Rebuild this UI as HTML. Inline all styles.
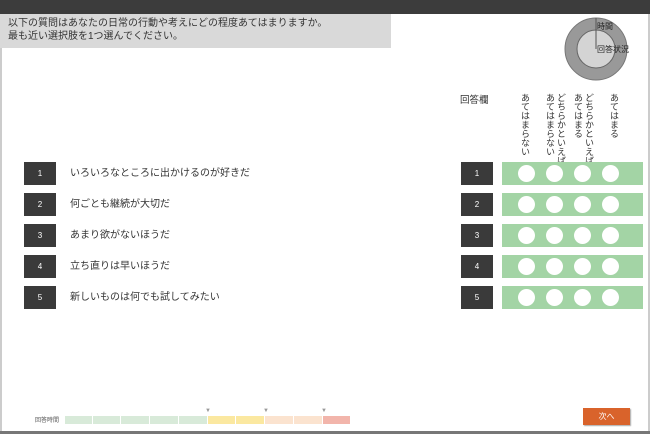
<!DOCTYPE html>
<html><head><meta charset="utf-8"><style>
*{margin:0;padding:0;box-sizing:border-box}
body{width:650px;height:434px;position:relative;background:#fff;font-family:"Liberation Sans","Noto Sans CJK JP",sans-serif;overflow:hidden;color:#333}
.a{position:absolute}
.top{left:0;top:0;width:650px;height:14px;background:#3c3c3c}
.bot{left:0;top:431px;width:650px;height:3px;background:#777}
.lb{left:0;top:14px;width:2px;height:417px;background:#ccc}
.rb{right:0;top:14px;width:2px;height:417px;background:#ccc}
.ins{left:0;top:14px;width:391px;height:34px;background:#d9d9d9;font-size:10px;line-height:13px;padding:3px 0 0 8px;color:#333}
.nb{width:32px;height:23px;background:#3a3a3a;color:#fff;font-size:8px;text-align:center;line-height:23px}
.q{left:70px;font-size:10px;line-height:23px}
.g{left:502px;width:141px;height:23px;background:#a3d4a5}
.c{position:absolute;top:3px;width:17px;height:17px;border-radius:50%;background:#fff}
.v{writing-mode:vertical-rl;font-size:9px;line-height:11px;top:93px;letter-spacing:0}
.seg{top:416px;height:8px}
.mk{top:408px;font-size:6px;color:#999}
</style></head><body>
<div class="a top"></div><div class="a lb"></div><div class="a rb"></div><div class="a bot"></div>
<div class="a ins">以下の質問はあなたの日常の行動や考えにどの程度あてはまりますか。<br>最も近い選択肢を1つ選んでください。</div>
<svg class="a" style="left:562px;top:16px" width="70" height="70">
<circle cx="34" cy="33" r="31" fill="#999" stroke="#777" stroke-width="1"/>
<circle cx="34" cy="33" r="19" fill="#d4d4d4" stroke="#666" stroke-width="1"/>
<line x1="34" y1="2" x2="34" y2="33" stroke="#555" stroke-width="1"/>
<text x="35" y="13" font-size="8" fill="#222" font-family="Noto Sans CJK JP">時間</text>
<text x="35" y="36" font-size="8" fill="#222" font-family="Noto Sans CJK JP">回答状況</text>
</svg>
<div class="a" style="left:460px;top:92px;font-size:9.5px">回答欄</div>
<div class="a v" style="left:519px">あてはまらない</div>
<div class="a v" style="left:544px">どちらかといえば<br>あてはまらない</div>
<div class="a v" style="left:572px">どちらかといえば<br>あてはまる</div>
<div class="a v" style="left:608px">あてはまる</div>

<div class="a nb" style="left:24px;top:162px">1</div><div class="a q" style="top:162px">いろいろなところに出かけるのが好きだ</div>
<div class="a nb" style="left:24px;top:193px">2</div><div class="a q" style="top:193px">何ごとも継続が大切だ</div>
<div class="a nb" style="left:24px;top:224px">3</div><div class="a q" style="top:224px">あまり欲がないほうだ</div>
<div class="a nb" style="left:24px;top:255px">4</div><div class="a q" style="top:255px">立ち直りは早いほうだ</div>
<div class="a nb" style="left:24px;top:286px">5</div><div class="a q" style="top:286px">新しいものは何でも試してみたい</div>

<div class="a nb" style="left:461px;top:162px">1</div>
<div class="a nb" style="left:461px;top:193px">2</div>
<div class="a nb" style="left:461px;top:224px">3</div>
<div class="a nb" style="left:461px;top:255px">4</div>
<div class="a nb" style="left:461px;top:286px">5</div>
<div class="a g" style="top:162px"><i class="c" style="left:16px"></i><i class="c" style="left:44px"></i><i class="c" style="left:72px"></i><i class="c" style="left:100px"></i></div>
<div class="a g" style="top:193px"><i class="c" style="left:16px"></i><i class="c" style="left:44px"></i><i class="c" style="left:72px"></i><i class="c" style="left:100px"></i></div>
<div class="a g" style="top:224px"><i class="c" style="left:16px"></i><i class="c" style="left:44px"></i><i class="c" style="left:72px"></i><i class="c" style="left:100px"></i></div>
<div class="a g" style="top:255px"><i class="c" style="left:16px"></i><i class="c" style="left:44px"></i><i class="c" style="left:72px"></i><i class="c" style="left:100px"></i></div>
<div class="a g" style="top:286px"><i class="c" style="left:16px"></i><i class="c" style="left:44px"></i><i class="c" style="left:72px"></i><i class="c" style="left:100px"></i></div>

<div class="a" style="left:35px;top:415px;font-size:6px;color:#555">回答時間</div>
<div class="a seg" style="left:65px;width:27px;background:#d8ead9"></div>
<div class="a seg" style="left:93px;width:27px;background:#d8ead9"></div>
<div class="a seg" style="left:121px;width:28px;background:#d8ead9"></div>
<div class="a seg" style="left:150px;width:28px;background:#d8ead9"></div>
<div class="a seg" style="left:179px;width:28px;background:#d8ead9"></div>
<div class="a seg" style="left:208px;width:27px;background:#fbe8a0"></div>
<div class="a seg" style="left:236px;width:28px;background:#fbe8a0"></div>
<div class="a seg" style="left:265px;width:28px;background:#fbe3cf"></div>
<div class="a seg" style="left:294px;width:28px;background:#fbe3cf"></div>
<div class="a seg" style="left:323px;width:27px;background:#f2b5ab"></div>
<div class="a mk" style="left:205px">▼</div>
<div class="a mk" style="left:263px">▼</div>
<div class="a mk" style="left:321px">▼</div>
<div class="a" style="left:583px;top:408px;width:47px;height:17px;background:#d9632b;color:#fff;font-size:8px;text-align:center;line-height:17px;box-shadow:1px 1px 1px #aaa">次へ</div>
</body></html>
